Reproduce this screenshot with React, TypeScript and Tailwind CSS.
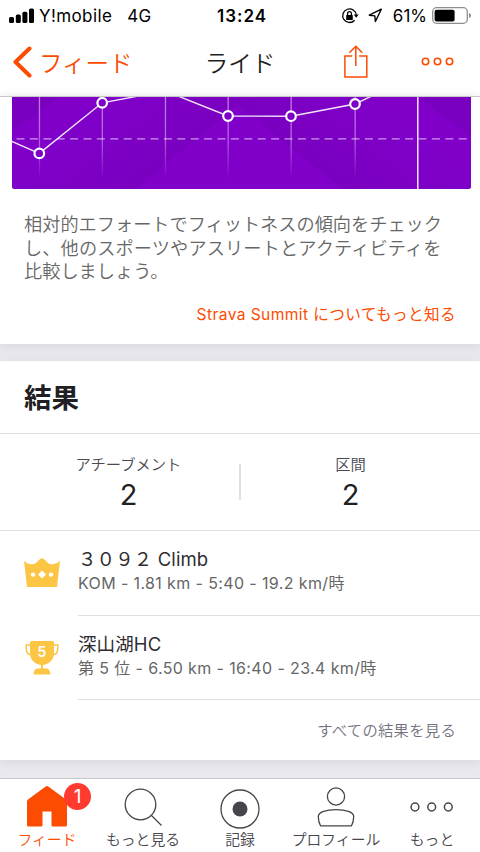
import type { ReactNode } from "react";
import clsx from "clsx";

const POINTS = [
  { x: 27.3, y: 56.4 },
  { x: 90.2, y: 5.8 },
  { x: 153.3, y: -6 },
  { x: 216, y: 19 },
  { x: 279, y: 19.2 },
  { x: 343, y: 7 },
];

type Result = { title: string; detail: string; icon: ReactNode };

function StatusBar() {
  return (
    <div className="grid h-[31px] grid-cols-3 items-center text-[17px] leading-5 text-black">
      <div className="flex items-center pl-[9px]">
        <svg width="25" height="16" viewBox="0 0 25 16" fill="currentColor">
          <rect x="0" y="9" width="5" height="6" rx="1.5" />
          <rect x="6.8" y="6.5" width="5" height="8.5" rx="1.5" />
          <rect x="13.4" y="3.8" width="5" height="11.2" rx="1.5" />
          <rect x="20" y="0.6" width="5" height="14.4" rx="1.5" />
        </svg>
        <span className="ml-[5px] whitespace-nowrap tracking-[0.4px]">Y!mobile</span>
        <span className="ml-[15px] tracking-[0.3px]">4G</span>
      </div>
      <div className="pl-1 text-center font-semibold tracking-[1px]">13:24</div>
      <div className="flex items-center justify-end pr-[8px]">
        <svg width="18" height="18" viewBox="0 0 18 18" fill="none" stroke="currentColor" strokeWidth="1.3">
          <path d="M13.6 13.2A6.8 6.8 0 1 1 15.3 8.2" />
          <path d="M12.8 7.6h4.8l-2.4 3.2z" fill="currentColor" stroke="none" />
          <rect x="5.2" y="8" width="6.6" height="5" rx="0.6" fill="currentColor" stroke="none" />
          <path d="M6.6 8V6.6a1.9 1.9 0 0 1 3.8 0V8" />
        </svg>
        <svg className="ml-[9px]" width="15" height="15" viewBox="0 0 15 15" fill="none" stroke="currentColor" strokeWidth="1.4" strokeLinejoin="round">
          <path d="M13.3 1.2 1.3 7.2l5.5.7.6 5.6z" />
        </svg>
        <span className="ml-[10px] mr-[5px]">61%</span>
        <svg width="40" height="17" viewBox="0 0 40 17" fill="none">
          <rect x="0.7" y="0.7" width="34.6" height="15.6" rx="4" stroke="#8e8e8e" strokeWidth="1.3" />
          <rect x="2.6" y="2.8" width="20" height="11.6" rx="2" fill="#000" />
          <path d="M37 6c1.6.5 2 1.5 2 2.5s-.4 2-2 2.5z" fill="#8e8e8e" />
        </svg>
      </div>
    </div>
  );
}

function NavBar() {
  return (
    <div className="grid h-[65px] grid-cols-3 items-center text-[23.5px] leading-8 font-[350]">
      <div className="flex items-center pl-[13px] text-[#fc4c02]">
        <svg className="-mt-1" width="19" height="32" viewBox="0 0 19 32" fill="none" stroke="currentColor" strokeWidth="4" strokeLinecap="round" strokeLinejoin="round">
          <path d="M16.5 2.500 2.500 16l14 13.500" />
        </svg>
        <span className="ml-[7px] whitespace-nowrap">フィード</span>
      </div>
      <div className="text-center text-[#1f1f24]">ライド</div>
      <div className="flex items-center justify-end pr-[26px] text-[#fc4c02]">
        <svg className="-mt-1" width="24" height="34" viewBox="0 0 24 34" fill="none" stroke="currentColor" strokeWidth="1.5">
          <path d="M8.200 11H.9v20.900h21.900V11h-7.600M11.800 21V1.200M5.300 7.700l6.500-6.500 6.500 6.500" />
        </svg>
        <svg className="-mt-1 ml-[53px]" width="33" height="9" viewBox="0 0 33 9" fill="none" stroke="currentColor" strokeWidth="1.6">
          <circle cx="4.500" cy="4.500" r="3.200" />
          <circle cx="16.500" cy="4.500" r="3.200" />
          <circle cx="28.500" cy="4.500" r="3.200" />
        </svg>
      </div>
    </div>
  );
}

function EffortChart() {
  const line = [{ x: -1, y: 44 }, ...POINTS, { x: 406, y: -23 }];
  return (
    <svg className="block rounded-b-[3px]" width="459" height="92" viewBox="0 0 459 92" fill="none">
      <defs>
        <linearGradient id="fade" x1="0" y1="0" x2="0" y2="82" gradientUnits="userSpaceOnUse">
          <stop offset="0" stopColor="#fff" stopOpacity="0.5" />
          <stop offset="0.5" stopColor="#fff" stopOpacity="0.4" />
          <stop offset="1" stopColor="#fff" stopOpacity="0" />
        </linearGradient>
        <linearGradient id="left" x1="175" y1="50" x2="115" y2="-24" gradientUnits="userSpaceOnUse">
          <stop offset="0" stopColor="#7a00c0" />
          <stop offset="1" stopColor="#8000ca" />
        </linearGradient>
        <linearGradient id="right" x1="280" y1="52" x2="340" y2="-24" gradientUnits="userSpaceOnUse">
          <stop offset="0" stopColor="#7a00c0" />
          <stop offset="1" stopColor="#8000ca" />
        </linearGradient>
      </defs>
      <rect width="459" height="92" fill="#8000ca" />
      <path d="M0 0h236L123 92H0z" fill="url(#left)" />
      <path d="M0 0h48L0 34z" fill="#7a00c0" />
      <path d="M216 0h243v92H331z" fill="url(#right)" />
      <path d="M406 0h53v40z" fill="#7a00c0" />
      {POINTS.map((p) => (
        <rect key={p.x} x={p.x - 0.5} y="0" width="1.3" height="82" fill="url(#fade)" />
      ))}
      <path d="M4.500 41.900H455" stroke="#fff" strokeOpacity="0.6" strokeWidth="1.3" strokeDasharray="8 5.400" />
      <path d="M405.800 0v92" stroke="#fff" strokeOpacity="0.9" strokeWidth="1.5" />
      <polyline points={line.map((p) => `${p.x},${p.y}`).join(" ")} stroke="#fff" strokeOpacity="0.9" strokeWidth="1.4" />
      {POINTS.filter((p) => p.y > 0).map((p) => (
        <circle key={p.x} cx={p.x} cy={p.y} r="4.800" fill="#7d00c6" stroke="#fff" strokeWidth="2.2" />
      ))}
    </svg>
  );
}

function CrownIcon() {
  return (
    <svg width="38" height="30" viewBox="0 0 38 30">
      <path d="M1 2.800c4 4.200 10 4.700 13 1.200C16 1.800 17.500.8 19 0c1.500.8 3 1.800 5 4 3 3.500 9 3 13-1.500L34 29H4z" fill="#fcc544" />
      <circle cx="10" cy="16.600" r="2.200" fill="#fff" />
      <circle cx="28" cy="16.600" r="2.200" fill="#fff" />
      <path d="m19 12.600 4 4-4 4-4-4z" fill="#fff" />
    </svg>
  );
}

function TrophyIcon() {
  return (
    <svg className="-mt-px" width="38" height="34" viewBox="0 0 38 34">
      <path d="M8 4H3.200v3.500c0 4 2 6.500 6.200 6.500M30 4h4.800v3.500c0 4-2 6.500-6.200 6.500" fill="none" stroke="#fcc544" strokeWidth="1.5" />
      <path d="M8.500 0h21q1.500 0 1.500 1.500V12c0 7-5 11.200-11 12v3.500h3.500c2.500 0 3.500 2.500 4 6h-17c.5-3.500 1.500-6 4-6H18V24C12 23.200 7 19 7 12V1.500Q7 0 8.500 0z" fill="#fcc544" />
      <text x="19" y="15.500" textAnchor="middle" fontSize="14" fontWeight="600" fill="#fff">5</text>
    </svg>
  );
}

const RESULTS: Result[] = [
  { title: "３０９２ Climb", detail: "KOM - 1.81 km - 5:40 - 19.2 km/時", icon: <CrownIcon /> },
  { title: "深山湖HC", detail: "第 5 位 - 6.50 km - 16:40 - 23.4 km/時", icon: <TrophyIcon /> },
];

function Stat({ label, value }: { label: string; value: string }) {
  return (
    <div className="flex flex-1 flex-col items-center text-center">
      <span className="text-[15.3px] leading-5 font-[350] text-[#4a4a50]">{label}</span>
      <span className="mt-[3px] text-[29px] leading-[34px] text-[#1f1f24]">{value}</span>
    </div>
  );
}

const TABS = [
  {
    label: "フィード",
    icon: (
      <svg width="40" height="41" viewBox="0 0 40 41" fill="currentColor">
        <path d="M18.700.5q1.300-.8 2.600 0L39 13.500q1 .8 1 2V39q0 1.500-1.500 1.500H26q-1.500 0-1.500-1.500V25.500h-9V39q0 1.500-1.500 1.500H1.500Q0 40.500 0 39V15.500q0-1.200 1-2z" />
      </svg>
    ),
  },
  {
    label: "もっと見る",
    icon: (
      <svg width="38" height="38" viewBox="0 0 38 38" fill="none" stroke="currentColor" strokeWidth="1.3">
        <circle cx="16.500" cy="16.500" r="15.300" />
        <path d="m27.500 27.500 10 10" />
      </svg>
    ),
  },
  {
    label: "記録",
    icon: (
      <svg width="40" height="40" viewBox="0 0 40 40" fill="none" stroke="currentColor" strokeWidth="1.3">
        <circle cx="20" cy="20" r="19" />
        <circle cx="20" cy="20" r="7.500" fill="currentColor" stroke="none" />
      </svg>
    ),
  },
  {
    label: "プロフィール",
    icon: (
      <svg width="38" height="40" viewBox="0 0 38 40" fill="none" stroke="currentColor" strokeWidth="1.3">
        <circle cx="19" cy="9.500" r="8.600" />
        <path d="M3.500 38.800C2 36 1.300 33 1.300 29.500c0-4.500 8-6.800 17.700-6.800s17.700 2.300 17.700 6.800c0 3.500-.7 6.500-2.200 9.300z" strokeLinejoin="round" />
      </svg>
    ),
  },
  {
    label: "もっと",
    icon: (
      <svg width="44" height="10" viewBox="0 0 44 10" fill="none" stroke="currentColor" strokeWidth="1.5">
        <circle cx="5" cy="5" r="3.900" />
        <circle cx="21.700" cy="5" r="3.900" />
        <circle cx="38.300" cy="5" r="3.900" />
      </svg>
    ),
  },
];

const TAB_ICON_TOP = ["pt-[7px]", "pt-[9px]", "pt-[10px]", "pt-[8px]", "pt-[23px]"];

export default function App() {
  return (
    <div className="flex h-[852px] w-[480px] flex-col overflow-hidden bg-white font-['Inter','Noto_Sans_CJK_JP',sans-serif]">
      <header className="h-[97px] shrink-0">
        <StatusBar />
        <NavBar />
      </header>

      <main className="-mt-px h-[682px] shrink-0 bg-[#e9e8ed]">
        <section className="h-[248px] border-t border-[#c8c8c8] bg-white shadow-[0_2px_10px_#d9d8df]">
          <div className="pl-[12px]">
            <EffortChart />
          </div>
          <p className="mt-[24px] pl-[24px] text-[18.2px] leading-[23.5px] font-[350] text-[#666]">
            相対的エフォートでフィットネスの傾向をチェック
            <br />
            <span className="tracking-[0.12px]">し、他のスポーツやアスリートとアクティビティを</span>
            <br />
            比較しましょう。
          </p>
          <p className="mt-[19px] pr-[24px] text-right text-[15.6px] leading-6 font-[390] tracking-[0.4px] text-[#fc4c02]">
            Strava Summit についてもっと知る
          </p>
        </section>

        <section className="mt-[17px] h-[399px] bg-white shadow-[0_2px_10px_#d9d8df]">
          <h2 className="flex h-[73px] items-center border-b border-[#dfdfe4] pt-[3px] pl-[24px] text-[27.5px] font-bold text-[#1f1f24]">
            結果
          </h2>
          <div className="relative flex h-[97px] border-b border-[#dfdfe4] pt-[21px]">
            <div className="flex w-[257px]">
              <Stat label="アチーブメント" value="2" />
            </div>
            <div className="flex w-[187px]">
              <Stat label="区間" value="2" />
            </div>
            <div className="absolute top-[30px] left-[239px] h-[36px] w-[1.5px] bg-[#dfdfe4]" />
          </div>
          {RESULTS.map((r) => (
            <div key={r.title} className="flex h-[84.5px] pl-[23px]">
              <div className="flex w-[55px] shrink-0 pt-[26.5px]">{r.icon}</div>
              <div className="flex-1 border-b border-[#dfdfe4] pt-[16px]">
                <div className="text-[18.5px] leading-[25px] font-[390] tracking-[0.1px] text-[#2d2d32]">{r.title}</div>
                <div className="text-[16px] leading-[22px] font-[390] tracking-[0.38px] text-[#666]">{r.detail}</div>
              </div>
            </div>
          ))}
          <div className="pt-[19px] pr-[24px] text-right text-[15.3px] leading-6 font-[350] tracking-[0.3px] text-[#72727e]">すべての結果を見る</div>
        </section>
      </main>

      <nav className="flex h-[74px] shrink-0 border-t border-[#c9c8ce] bg-white">
        {TABS.map((tab, i) => (
          <div
            key={tab.label}
            className={clsx(
              "relative flex flex-col items-center",
              i === 0 ? "w-[94px] text-[#fc4c02]" : "text-[#45454d]",
              i === 1 && "w-[98px]",
              i > 1 && "w-[96px]"
            )}
          >
            <div className={clsx("h-[51px]", TAB_ICON_TOP[i])}>{tab.icon}</div>
            <span className="text-[14.8px] leading-5 font-[350] whitespace-nowrap">{tab.label}</span>
            {i === 0 && (
              <span className="absolute top-[4px] left-[64px] flex h-[27px] w-[27px] items-center justify-center rounded-full bg-[#ff3b30] pt-px text-[19px] text-white">
                1
              </span>
            )}
          </div>
        ))}
      </nav>
    </div>
  );
}
